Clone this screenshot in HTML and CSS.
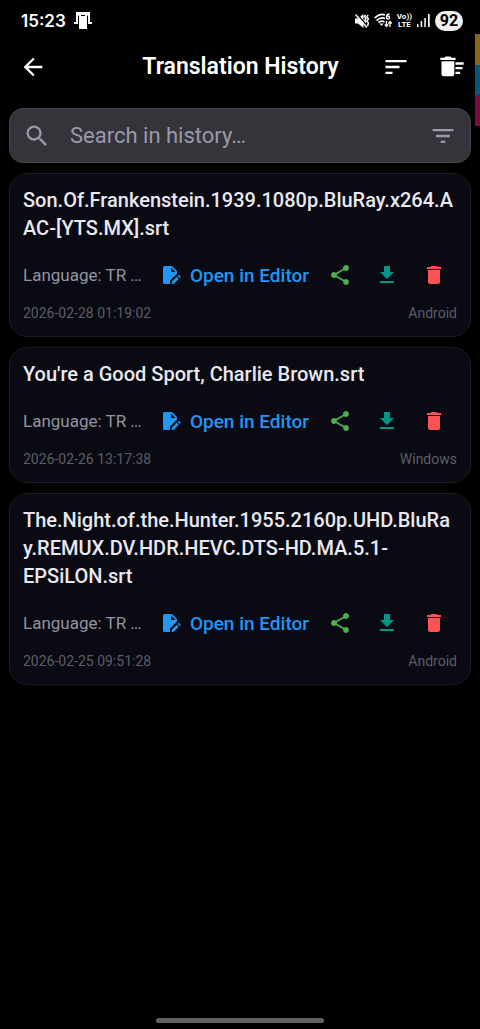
FILE: index.html
```html
<!DOCTYPE html>
<html lang="en">
<head>
<meta charset="utf-8">
<meta name="viewport" content="width=device-width, initial-scale=1">
<title>Translation History</title>
<link rel="stylesheet" href="styles.css">
</head>
<body>
<svg class="defs" aria-hidden="true">
  <symbol id="edit" viewBox="0 0 20 20"><path d="M2.500 1H10l5 5v2.500l-7 7V19H2.500A1.500 1.500 0 0 1 1 17.500v-15A1.500 1.500 0 0 1 2.500 1zM9 2.500V7h4.500z" fill-rule="evenodd"/><path d="M9.800 16.800l5-5 2 2-5.200 5.200H9.800zM15.600 11l.8-.8q.5-.5 1 0l1 1q.5.5 0 1l-.8.8z"/></symbol>
  <symbol id="share" viewBox="0 0 24 24"><path d="M18 16.080c-.76 0-1.440.3-1.960.77L8.910 12.700c.05-.23.09-.46.09-.7s-.04-.47-.09-.7l7.050-4.110c.54.5 1.250.81 2.040.81 1.660 0 3-1.340 3-3s-1.340-3-3-3-3 1.340-3 3c0 .24.04.47.09.7L8.040 9.810C7.500 9.310 6.790 9 6 9c-1.660 0-3 1.340-3 3s1.340 3 3 3c.79 0 1.500-.31 2.040-.81l7.120 4.160c-.05.21-.08.43-.08.65 0 1.610 1.310 2.920 2.920 2.920s2.920-1.310 2.920-2.920-1.310-2.920-2.920-2.920z"/></symbol>
  <symbol id="download" viewBox="0 0 24 24"><path d="M19 9h-4V3H9v6H5l7 7 7-7zM5 18v2h14v-2H5z"/></symbol>
  <symbol id="trash" viewBox="0 0 24 24"><path d="M6 19c0 1.100.9 2 2 2h8c1.100 0 2-.9 2-2V7H6v12zM19 4h-3.500l-1-1h-5l-1 1H5v2h14V4z"/></symbol>
</svg>
<div class="screen">
  <div class="status">
    <span class="time">15:23</span>
    <svg class="st-phone" viewBox="0 0 18 17"><path d="M2 0h14v10h2v2h-4V3.500H4V12H0v-2h2z"/><path d="M5 2.500h8V17H5z"/><path d="M7 3.500h4" stroke="#000" fill="none"/></svg>
    <span class="status-icons">
      <svg class="st-mute" viewBox="0 0 14 14"><path d="M0 4.500h3L8.500 0v14L3 9.500H0z"/><path d="M2 0l11 13" stroke="#000" stroke-width="1.500"/><path d="M.5.500l11.500 13M10.500 1l-1 1.500L11 4.500 9.800 6.500 11 8.500M13 1l-1 2 1.500 2L12 7l1.500 2-1 3" fill="none" stroke="#fff" stroke-width="1.500"/></svg>
      <svg class="st-wifi" viewBox="0 0 18 15"><path d="M.7 5Q6 0 11 2M2.500 7.500Q7 3.500 11 5.500M4.500 9.500Q7.500 7 10.500 9" fill="none" stroke="#fff" stroke-width="1.700"/><path d="M5.500 10.500h4L7.500 13z"/><path d="M15.500 1q-3 0-3 3.500m0 0a1.500 1.500 0 1 0 3 0 1.500 1.500 0 1 0-3 0" fill="none" stroke="#fff" stroke-width="1.400"/><path d="M12.500 8v5M10.800 11.500l1.700 2 1.700-2M16 14V9M14.300 10.500l1.700-2 1.700 2" fill="none" stroke="#fff" stroke-width="1.300"/></svg>
      <span class="volte"><span>Vo))</span><span>LTE</span></span>
      <svg class="st-signal" viewBox="0 0 13 13"><path d="M0 10h1.500v3H0zM3.700 7h1.500v6H3.700zM7.300 4h1.500v9H7.300zM11 0h1.700v13H11z"/></svg>
      <span class="battery">92</span>
    </span>
  </div>
  <header class="appbar">
    <button class="bar-btn" aria-label="Back"><svg class="i28" viewBox="0 0 24 24"><path d="M20 11H7.830l5.590-5.590L12 4l-8 8 8 8 1.410-1.410L7.830 13H20v-2z"/></svg></button>
    <h1 class="heading">Translation History</h1>
    <button class="bar-btn" aria-label="Sort"><svg class="i28" viewBox="0 0 24 24"><path d="M3 18h6v-2H3v2zM3 6v2h18V6H3zm0 7h12v-2H3v2z"/></svg></button>
    <button class="bar-btn" aria-label="Clear history"><svg class="i28" viewBox="0 0 24 24"><path d="M15 16h4v2h-4zm0-8h7v2h-7zm0 4h6v2h-6zM3 18c0 1.100.9 2 2 2h7c1.100 0 2-.9 2-2V7H3v11zM15 4h-3.500l-1-1h-4l-1 1H2v2h13V4z"/></svg></button>
  </header>
  <main class="content">
    <div class="search">
      <svg class="i28" viewBox="0 0 24 24"><path d="M15.500 14h-.79l-.28-.27A6.471 6.471 0 0 0 16 9.500 6.500 6.500 0 1 0 9.500 16c1.610 0 3.090-.59 4.230-1.570l.27.28v.79l5 4.990L20.490 19l-4.990-5zm-6 0C7.010 14 5 11.990 5 9.500S7.010 5 9.500 5 14 7.010 14 9.500 11.990 14 9.500 14z"/></svg>
      <input class="search-input" type="text" aria-label="Search in history" placeholder="Search in history…">
      <button class="filter" aria-label="Filter"><svg class="i28" viewBox="0 0 24 24"><path d="M10 18h4v-2h-4v2zM3 6v2h18V6H3zm3 7h12v-2H6v2z"/></svg></button>
    </div>
    <article class="card">
      <h2 class="title">Son.Of.Frankenstein.1939.1080p.BluRay.x264.A<br>AC-[YTS.MX].srt</h2>
      <div class="actions">
        <span class="lang">Language: TR …</span>
        <button class="open"><svg class="i20"><use href="#edit"/></svg>Open in Editor</button>
        <button class="act share" aria-label="Share"><svg class="i24"><use href="#share"/></svg></button>
        <button class="act download" aria-label="Download"><svg class="i24"><use href="#download"/></svg></button>
        <button class="act delete" aria-label="Delete"><svg class="i24"><use href="#trash"/></svg></button>
      </div>
      <div class="meta"><time>2026-02-28 01:19:02</time><span>Android</span></div>
    </article>
    <article class="card">
      <h2 class="title">You're a Good Sport, Charlie Brown.srt</h2>
      <div class="actions">
        <span class="lang">Language: TR …</span>
        <button class="open"><svg class="i20"><use href="#edit"/></svg>Open in Editor</button>
        <button class="act share" aria-label="Share"><svg class="i24"><use href="#share"/></svg></button>
        <button class="act download" aria-label="Download"><svg class="i24"><use href="#download"/></svg></button>
        <button class="act delete" aria-label="Delete"><svg class="i24"><use href="#trash"/></svg></button>
      </div>
      <div class="meta"><time>2026-02-26 13:17:38</time><span>Windows</span></div>
    </article>
    <article class="card">
      <h2 class="title">The.Night.of.the.Hunter.1955.2160p.UHD.BluRa<br>y.REMUX.DV.HDR.HEVC.DTS-HD.MA.5.1-<br>EPSiLON.srt</h2>
      <div class="actions">
        <span class="lang">Language: TR …</span>
        <button class="open"><svg class="i20"><use href="#edit"/></svg>Open in Editor</button>
        <button class="act share" aria-label="Share"><svg class="i24"><use href="#share"/></svg></button>
        <button class="act download" aria-label="Download"><svg class="i24"><use href="#download"/></svg></button>
        <button class="act delete" aria-label="Delete"><svg class="i24"><use href="#trash"/></svg></button>
      </div>
      <div class="meta"><time>2026-02-25 09:51:28</time><span>Android</span></div>
    </article>
  </main>
  <div class="home-bar"></div>
  <div class="edge-panel"><span class="gold"></span><span class="blue"></span><span class="crimson"></span></div>
</div>
</body>
</html>
```
FILE: styles.css
```css
* { box-sizing: border-box; }
body { margin: 0; background: #000; color: #fff; font-family: Roboto, sans-serif; }
button { border: 0; padding: 0; background: none; color: inherit; font: inherit; display: flex; align-items: center; justify-content: center; cursor: pointer; }
svg { display: block; fill: currentColor; flex: none; }
.defs { position: absolute; width: 0; height: 0; }
.i20 { width: 20px; height: 20px; }
.i24 { width: 24px; height: 24px; }
.i28 { width: 28px; height: 28px; }

.screen { position: relative; min-height: 100vh; display: flex; flex-direction: column; }

.status { display: flex; align-items: center; height: 41px; padding: 0 17px 0 21px; }
.time { font: 600 17px/20px Inter, sans-serif; }
.st-phone { width: 18px; height: 17px; margin-left: 8px; }
.status-icons { display: flex; align-items: center; gap: 5px; margin-left: auto; }
.st-mute { width: 14px; height: 14px; }
.st-wifi { width: 18px; height: 15px; }
.volte { display: flex; flex-direction: column; align-items: center; font: 700 8px/8px Roboto, sans-serif; }
.volte span { height: 8px; }
.st-signal { width: 13px; height: 13px; }
.battery { width: 28px; height: 20px; border-radius: 10px; background: #eee; color: #000; font: 700 16px/20px Roboto, sans-serif; text-align: center; }

.appbar { display: flex; align-items: center; height: 51px; padding: 0 0 0 5px; }
.bar-btn { width: 56px; height: 50px; }
.heading { flex: 1; margin: 0; padding-left: 52px; font-size: 23px; line-height: 28px; font-weight: 600; text-align: center; white-space: nowrap; }

.content { flex: 1; display: flex; flex-direction: column; gap: 10px; padding: 16px 9px 0; }
.search { display: flex; align-items: center; height: 55px; padding: 0 13px; border: 1px solid #45454b; border-radius: 14px; background: #35343b; color: #9a9aab; }
.search-input { flex: 1; min-width: 0; margin-left: 19px; padding: 0; border: 0; outline: 0; background: none; color: #fff; font: 22px/28px Roboto, sans-serif; }
.search-input::placeholder { color: #9a9aab; opacity: 1; }
.filter { height: 53px; }

.card { padding: 12px 13px 14px; border: 1px solid #1c1c23; border-radius: 18px; background: #090a12; }
.title { margin: 0; color: #e9e8f0; font-size: 20px; line-height: 28px; font-weight: 500; white-space: nowrap; }
.actions { display: flex; align-items: center; height: 56px; margin: 5px 0 1px; }
.lang { flex: 1; min-width: 0; color: #9494a0; font-size: 17px; white-space: nowrap; }
.open { gap: 8px; height: 46px; margin-right: 7px; color: #2196f3; font-size: 19px; font-weight: 500; white-space: nowrap; }
.act { width: 47px; height: 47px; }
.share { color: #4caf50; }
.download { color: #009688; }
.delete { color: #ff5252; }
.meta { display: flex; justify-content: space-between; color: #5d5d67; font-size: 14px; line-height: 18px; }

.home-bar { align-self: center; width: 35%; height: 5px; margin-bottom: 6px; border-radius: 3px; background: #606060; }
.edge-panel { position: absolute; top: 34px; right: 0; width: 5px; height: 92px; display: flex; flex-direction: column; }
.edge-panel span { flex: 1; }
.gold { background: #8b6519; }
.blue { background: #00587f; }
.crimson { background: #7c0b40; }
```
